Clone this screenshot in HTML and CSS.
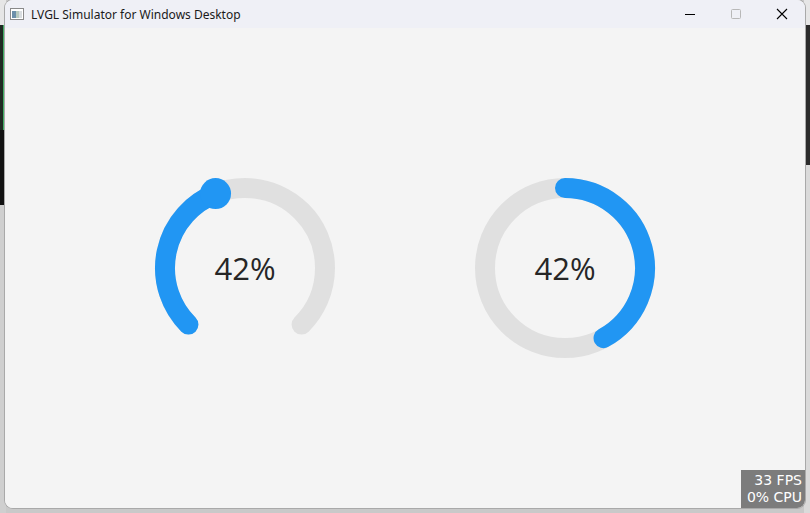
FILE: index.html
```html
<!DOCTYPE html>
<html>
<head>
<meta charset="utf-8">
<link rel="stylesheet" href="styles.css">
</head>
<body>
<div class="desk-left"><div class="dl-top"></div><div class="dl-dark"><div class="green"></div></div><div class="dl-black"></div><div class="dl-low"></div></div>
<div class="desk-right"><div class="dr-top"></div><div class="dr-dark"></div><div class="dr-low"></div></div>
<div class="window">
  <div class="titlebar">
    <svg class="app-icon" width="14" height="12" viewBox="0 0 14 12">
      <rect x="0.5" y="0.5" width="13" height="11" fill="#fff" stroke="#8a8a8a"/>
      <rect x="2" y="3" width="4" height="7" fill="#6c8faa"/>
      <rect x="6" y="3" width="3" height="7" fill="#b7c9bf"/>
      <rect x="9" y="3" width="3" height="7" fill="#d9dde0"/>
    </svg>
    <span class="title">LVGL Simulator for Windows Desktop</span>
    <div class="controls">
      <svg class="ctl" width="46" height="28" viewBox="0 0 46 28"><path d="M18 14.5h10" stroke="#000" stroke-width="1"/></svg>
      <svg class="ctl" width="46" height="28" viewBox="0 0 46 28"><rect x="18.5" y="9.5" width="9" height="9" rx="1" fill="none" stroke="#b8b8b8"/></svg>
      <svg class="ctl" width="46" height="28" viewBox="0 0 46 28"><path d="M18 9l10 10M28 9l-10 10" stroke="#000" stroke-width="1.1"/></svg>
    </div>
  </div>
  <div class="client">
    <div class="gauge">
      <svg width="180" height="180" viewBox="0 0 180 180">
        <path d="M33.43 146.57 A80 80 0 1 1 146.57 146.57" fill="none" stroke="#e0e0e0" stroke-width="20" stroke-linecap="round"/>
        <path d="M33.43 146.57 A80 80 0 0 1 60.55 15.62" fill="none" stroke="#2196f3" stroke-width="20" stroke-linecap="round"/>
        <circle cx="60.55" cy="15.62" r="15.5" fill="#2196f3"/>
      </svg>
      <span class="val">42%</span>
    </div>
    <div class="gauge">
      <svg width="180" height="180" viewBox="0 0 180 180">
        <circle cx="90" cy="90" r="80" fill="none" stroke="#e0e0e0" stroke-width="20"/>
        <path d="M90 10 A80 80 0 0 1 128.54 160.10" fill="none" stroke="#2196f3" stroke-width="20" stroke-linecap="round"/>
      </svg>
      <span class="val">42%</span>
    </div>
    <div class="perf"><span class="pl">33 FPS</span><span class="pl">0% CPU</span></div>
  </div>
</div>
</body>
</html>
```
FILE: styles.css
```css
html, body {
  margin: 0;
  padding: 0;
}
body {
  width: 810px;
  height: 513px;
  background: #c9c9c9;
  position: relative;
  overflow: hidden;
  font-family: "Segoe UI", "Noto Sans", "Liberation Sans", sans-serif;
}
.desk-left {
  position: absolute;
  left: 0;
  top: 0;
  width: 6px;
  height: 513px;
  display: flex;
  flex-direction: column;
}
.dl-top { height: 25px; background: #e6e6e6; }
.dl-dark { height: 105px; background: #1f2a22; position: relative; }
.green { position: absolute; left: 3px; top: 0; width: 2px; height: 105px; background: #3fae62; }
.dl-black { height: 75px; background: #121212; }
.dl-low { flex: 1; background: #cfcfcf; }
.desk-right {
  position: absolute;
  right: 0;
  top: 0;
  width: 6px;
  height: 513px;
  display: flex;
  flex-direction: column;
}
.dr-top { height: 25px; background: #e6e6e6; }
.dr-dark { height: 140px; background: #2b2b2b; }
.dr-low { flex: 1; background: #dadada; }

.window {
  position: absolute;
  left: 5px;
  top: 0;
  width: 800px;
  height: 508px;
  border-radius: 8px;
  overflow: hidden;
  box-shadow: 0 0 0 1px #a9a9a9;
  display: flex;
  flex-direction: column;
  background: #f4f4f4;
}
.titlebar {
  height: 28px;
  background: #eff0f6;
  display: flex;
  align-items: center;
  flex: none;
}
.app-icon {
  margin-left: 5px;
  margin-right: 7px;
}
.title {
  font-size: 12px;
  color: #1a1a1a;
  flex: 1;
  font-family: "Segoe UI", "Noto Sans", "Liberation Sans", sans-serif;
}
.controls {
  display: flex;
  height: 28px;
}
.ctl { display: block; }

.client {
  flex: 1;
  background: #f4f4f4;
  display: flex;
  justify-content: center;
  align-items: center;
  gap: 140px;
  position: relative;
}
.gauge {
  width: 180px;
  height: 180px;
  position: relative;
  display: flex;
  justify-content: center;
  align-items: center;
}
.gauge svg {
  position: absolute;
  left: 0;
  top: 0;
  overflow: visible;
}
.val {
  position: relative;
  font-family: "Open Sans", sans-serif;
  font-size: 31px;
  color: #262626;
  line-height: 1;
}
.perf {
  position: absolute;
  right: 0;
  bottom: 0;
  width: 64px;
  height: 38px;
  box-sizing: border-box;
  background: #7c7c7c;
  color: #fff;
  font-family: "DejaVu Sans", sans-serif;
  font-size: 14px;
  text-align: right;
  padding: 2px 3px 0 0;
  display: flex;
  flex-direction: column;
  align-items: flex-end;
}
.pl {
  display: block;
  line-height: 17px;
  height: 17px;
}
```
